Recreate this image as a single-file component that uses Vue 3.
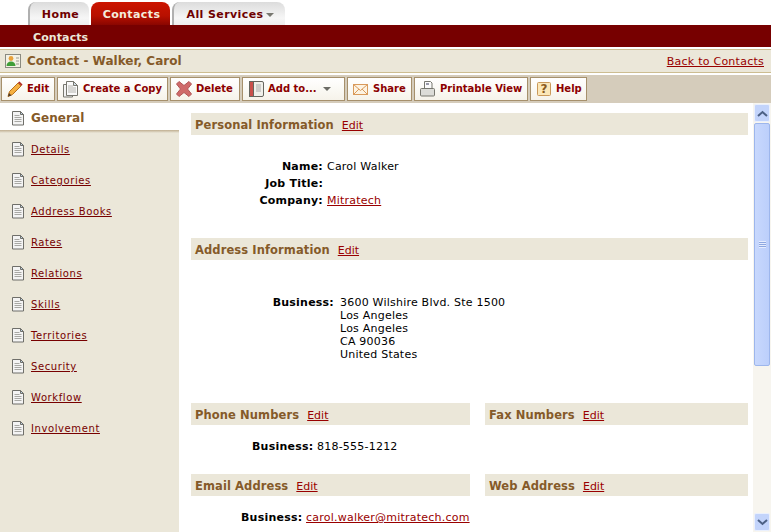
<script setup>
const tools = [
  { label: 'Edit', icon: 'pencil', width: 54 },
  { label: 'Create a Copy', icon: 'copy', width: 111 },
  { label: 'Delete', icon: 'cross', width: 70 },
  { label: 'Add to...', icon: 'book', width: 103, caret: true },
  { label: 'Share', icon: 'mail', width: 65 },
  { label: 'Printable View', icon: 'print', width: 114 },
  { label: 'Help', icon: 'help', width: 57 }
]

const sideLinks = [
  'Details', 'Categories', 'Address Books', 'Rates', 'Relations', 'Skills',
  'Territories', 'Security', 'Workflow', 'Involvement'
]

const addressLines = ['3600 Wilshire Blvd. Ste 1500', 'Los Angeles', 'Los Angeles', 'CA 90036', 'United States']
</script>

<template>
  <div class="page">
    <div class="tabs">
      <a class="tab">Home</a>
      <a class="tab active">Contacts</a>
      <a class="tab wide">All Services<i class="tab-caret"></i></a>
    </div>
    <div class="subnav">Contacts</div>

    <div class="titlebar">
      <svg class="title-icon" width="16" height="14" viewBox="0 0 16 14">
        <rect x="0.5" y="0.5" width="15" height="13" fill="#f4f1e4" stroke="#8a8a80" />
        <circle cx="6" cy="4.500" r="2.400" fill="#e8a23c" />
        <path d="M1.500 12c0-3 2-4.500 4.500-4.500s4.500 1.500 4.500 4.500z" fill="#3f9e38" />
        <path d="M11 4h3M11 7h3M11 10h3" stroke="#9a9a90" />
      </svg>
      <span class="title-text">Contact - Walker, Carol</span>
      <a class="back-link">Back to Contacts</a>
    </div>

    <div class="toolbar">
      <button v-for="t in tools" :key="t.label" class="tool" :style="{ width: t.width + 'px' }">
        <svg class="tool-icon" width="18" height="18" viewBox="0 0 18 18">
          <template v-if="t.icon === 'pencil'">
            <path d="M2 16.500l1.500-5L12 3l3 3-8.500 8.500z" fill="#f5b041" stroke="#b8701c" />
            <path d="M2 16.500l1-3.500 2.500 2.500z" fill="#4b3a2a" />
            <path d="M12 2.500l3.500 3.500 1-1.500-3-3z" fill="#b02a20" />
          </template>
          <template v-else-if="t.icon === 'copy'">
            <path d="M1.500 4.500h9v12.500h-9z" fill="#f2f2f2" stroke="#77776f" />
            <path d="M4.500 1.500h7l4 4v10h-11z" fill="#fafafa" stroke="#77776f" />
            <path d="M11.500 1.500v4h4z" fill="#d4e0e8" stroke="#77776f" />
            <path d="M6 6h5M6 8h8M6 10h8M6 12h8" stroke="#b4b4ae" />
          </template>
          <template v-else-if="t.icon === 'cross'">
            <path d="M4 1.500L9 5.500l5-4L16.500 4l-4 5 4 5-2.500 2.500-5-4-5 4L1.500 14l4-5-4-5z" fill="#cf6a6a" stroke="#b25656" />
          </template>
          <template v-else-if="t.icon === 'book'">
            <rect x="2.500" y="1.500" width="14" height="15" rx="1.500" fill="#f0f0ea" stroke="#66665f" />
            <rect x="2.500" y="1.500" width="4" height="15" fill="#c9504c" stroke="#66665f" />
            <path d="M9 5h5M9 7h5M9 9h5M9 11h5" stroke="#aaa" />
          </template>
          <template v-else-if="t.icon === 'mail'">
            <rect x="1.500" y="4.500" width="14" height="10" fill="#fdf3e2" stroke="#d99a5b" />
            <path d="M1.500 4.500l7 6 7-6M1.500 14.500l5.500-5.500M15.500 14.500l-5.500-5.500" fill="none" stroke="#d99a5b" />
          </template>
          <template v-else-if="t.icon === 'print'">
            <path d="M5.500 1.500h6l1.500 1.500v6h-7.500z" fill="#fafafa" stroke="#77776f" />
            <path d="M7 3h3v2H7z" fill="#99a" />
            <rect x="1.500" y="8.500" width="14" height="7.500" rx="1" fill="#dcdcd8" stroke="#77776f" />
          </template>
          <template v-else>
            <rect x="2.500" y="2.500" width="13" height="13" rx="1" fill="#fbe7b8" stroke="#c9995a" />
            <text x="9" y="13" text-anchor="middle" class="help-glyph">?</text>
          </template>
        </svg>
        <span class="tool-label">{{ t.label }}</span>
        <i v-if="t.caret" class="tool-caret"></i>
      </button>
    </div>

    <div class="body">
      <aside class="side">
        <div class="side-current">
          <svg class="doc" width="14" height="15" viewBox="0 0 14 15">
            <path d="M1.500 .5h8l3 3v10.500h-11z" fill="#f4f4f4" stroke="#6f6f6a" />
            <path d="M9.500 .5v3h3z" fill="#bcd4e6" stroke="#6f6f6a" />
            <path d="M3.500 4.500h5M3.500 6.500h7M3.500 8.500h7M3.500 10.500h7" stroke="#a8a8a4" />
          </svg>
          <span>General</span>
        </div>
        <div class="side-list">
          <div v-for="l in sideLinks" :key="l" class="side-item">
            <svg class="doc" width="14" height="15" viewBox="0 0 14 15">
              <path d="M1.500 .5h8l3 3v10.500h-11z" fill="#f4f4f4" stroke="#6f6f6a" />
              <path d="M9.500 .5v3h3z" fill="#bcd4e6" stroke="#6f6f6a" />
              <path d="M3.500 4.500h5M3.500 6.500h7M3.500 8.500h7M3.500 10.500h7" stroke="#a8a8a4" />
            </svg>
            <a>{{ l }}</a>
          </div>
        </div>
      </aside>

      <main class="main">
        <div class="sec-head"><b>Personal Information</b><a>Edit</a></div>
        <dl class="fields">
          <div><dt>Name:</dt><dd>Carol Walker</dd></div>
          <div><dt>Job Title:</dt><dd></dd></div>
          <div><dt>Company:</dt><dd><a>Mitratech</a></dd></div>
        </dl>

        <div class="sec-head"><b>Address Information</b><a>Edit</a></div>
        <div class="address">
          <span class="addr-label">Business:</span>
          <div class="addr-lines">
            <div v-for="(line, i) in addressLines" :key="i">{{ line }}</div>
          </div>
        </div>

        <div class="cols">
          <div class="sec-head"><b>Phone Numbers</b><a>Edit</a></div>
          <div class="sec-head"><b>Fax Numbers</b><a>Edit</a></div>
        </div>
        <div class="line phone"><b>Business:</b> 818-555-1212</div>

        <div class="cols">
          <div class="sec-head"><b>Email Address</b><a>Edit</a></div>
          <div class="sec-head"><b>Web Address</b><a>Edit</a></div>
        </div>
        <div class="line email"><b>Business:</b> <a>carol.walker@mitratech.com</a></div>
      </main>

      <div class="scrollbar">
        <div class="sb-btn"><svg width="11" height="7" viewBox="0 0 11 7"><path d="M1 6l4.500-4 4.500 4" fill="none" stroke="#4d6185" stroke-width="2" /></svg></div>
        <div class="sb-thumb"><i></i></div>
        <div class="sb-track"></div>
        <div class="sb-btn"><svg width="11" height="7" viewBox="0 0 11 7"><path d="M1 1l4.500 4 4.500-4" fill="none" stroke="#4d6185" stroke-width="2" /></svg></div>
      </div>
    </div>
  </div>
</template>

<style>
html, body {
  margin: 0;
  overflow: hidden;
  background: #fff;
}
</style>

<style scoped>
.page {
  width: 771px;
  height: 532px;
  overflow: hidden;
  display: flex;
  flex-direction: column;
  font-family: "DejaVu Sans", Verdana, sans-serif;
  font-size: 11px;
  color: #000;
}

a {
  color: #990000;
  text-decoration: underline;
}

.tabs {
  display: flex;
  height: 23px;
  margin-top: 2px;
  padding-left: 28px;
  gap: 2px;
}

.tab {
  width: 61px;
  box-sizing: border-box;
  padding-left: 2px;
  text-align: center;
  line-height: 25px;
  font-weight: bold;
  font-size: 11px;
  letter-spacing: 0.4px;
  color: #6f0000;
  text-decoration: none;
  border-radius: 8px 8px 0 0;
  border-left: 2px solid #b0b0b0;
  background: linear-gradient(#dcdcdc, #f6f6f6 70%, #eee);
}

.tab.active {
  width: 79px;
  color: #f4ecdc;
  border-left: 0;
  background: linear-gradient(#cc1500, #b81000 60%, #8a0600);
}

.tab.wide {
  width: 113px;
}

.tab-caret {
  display: inline-block;
  margin-left: 3px;
  vertical-align: middle;
  border: 4px solid transparent;
  border-top-color: #77776f;
  border-bottom: 0;
}

.subnav {
  height: 22px;
  flex: none;
  box-sizing: border-box;
  padding-left: 33px;
  line-height: 25px;
  background: #770000;
  color: #ebe7d9;
  font-weight: bold;
  letter-spacing: 0.1px;
}

.titlebar {
  flex: none;
  height: 24px;
  margin-top: 2px;
  box-sizing: border-box;
  display: flex;
  align-items: center;
  padding: 0 7px 0 5px;
  background: #ebe7d9;
  border-top: 1px solid #cdbd91;
  border-bottom: 1px solid #cdbd91;
}

.title-icon {
  margin-right: 6px;
}

.title-text {
  font-size: 12px;
  font-weight: bold;
  color: #855a29;
}

.back-link {
  margin-left: auto;
  font-size: 11px;
  letter-spacing: 0.25px;
}

.toolbar {
  flex: none;
  height: 28px;
  margin-top: 2px;
  box-sizing: border-box;
  display: flex;
  align-items: center;
  gap: 2px;
  padding: 0 1px;
  background: #d5ccbb;
}

.tool {
  height: 24px;
  box-sizing: border-box;
  display: flex;
  align-items: center;
  padding: 0 0 1px 4px;
  border: 1px solid #a6906c;
  background: linear-gradient(#fff, #f6f3ea);
  font: inherit;
  cursor: pointer;
}

.tool-icon {
  flex: none;
  margin-right: 3px;
}

.tool-label {
  font-size: 10px;
  font-weight: bold;
  color: #8c0000;
  white-space: nowrap;
}

.help-glyph {
  font-size: 12px;
  font-weight: bold;
  fill: #8a5a1e;
}

.tool-caret {
  margin-left: 6px;
  border: 4px solid transparent;
  border-top-color: #6c6c66;
  border-bottom: 0;
}

.body {
  flex: 1;
  display: flex;
  min-height: 0;
}

.side {
  width: 179px;
  flex: none;
  background: #ebe7d9;
}

.side-current {
  height: 30px;
  box-sizing: border-box;
  display: flex;
  align-items: center;
  padding: 0 0 0 11px;
  background: linear-gradient(#fff 0 27px, #bfae90 27px, #ebe7d9 30px);
  font-size: 12px;
  font-weight: bold;
  color: #855a29;
}

.side-current span {
  margin-left: 6px;
  letter-spacing: 0.1px;
}

.side-list {
  padding-top: 1px;
}

.side-item {
  height: 31px;
  display: flex;
  align-items: center;
  padding-left: 11px;
  font-size: 10px;
}

.side-item a {
  margin-left: 6px;
  color: #770000;
  letter-spacing: 0.6px;
}

.main {
  flex: 1;
  padding: 10px 5px 0 12px;
  letter-spacing: 0.22px;
}

.sec-head {
  height: 22px;
  box-sizing: border-box;
  padding: 1px 0 0 4px;
  display: flex;
  align-items: center;
  gap: 8px;
  background: #ebe7d9;
}

.sec-head b {
  font-size: 11.5px;
  color: #855a29;
  letter-spacing: 0.1px;
}

.sec-head a {
  margin-top: 2px;
  font-size: 11px;
  letter-spacing: 0;
}

.fields {
  margin: 23px 0 29px;
}

.fields div {
  display: flex;
  height: 17px;
  line-height: 17px;
}

.fields dt {
  width: 132px;
  text-align: right;
  font-weight: bold;
}

.fields dd {
  margin: 0 0 0 4px;
}

.address {
  display: flex;
  line-height: 13px;
  margin: 36px 0 42px;
}

.addr-label {
  width: 143px;
  text-align: right;
  font-weight: bold;
  margin-right: 6px;
}

.cols {
  display: grid;
  grid-template-columns: 279px 263px;
  column-gap: 15px;
}

.line {
  line-height: 13px;
}

.phone {
  margin: 15px 0 21px 61px;
}

.email {
  margin: 15px 0 0 50px;
}

.scrollbar {
  width: 18px;
  flex: none;
  display: flex;
  flex-direction: column;
  padding: 1px 1px 1px;
  box-sizing: border-box;
  background: #f7f5ef;
}

.sb-btn {
  height: 16px;
  flex: none;
  display: flex;
  align-items: center;
  justify-content: center;
  border-radius: 2px;
  background: #c3d4fb;
  border: 1px solid #eaf0fd;
}

.sb-thumb {
  height: 241px;
  flex: none;
  margin-top: 1px;
  border-radius: 2px;
  background: linear-gradient(90deg, #c8d8fd, #bccffb);
  border: 1px solid #9db6ec;
  display: flex;
  align-items: center;
  justify-content: center;
}

.sb-thumb i {
  width: 7px;
  height: 7px;
  background: repeating-linear-gradient(#e6edfe 0 1px, #8ea8e0 1px 2px);
}

.sb-track {
  flex: 1;
}
</style>
